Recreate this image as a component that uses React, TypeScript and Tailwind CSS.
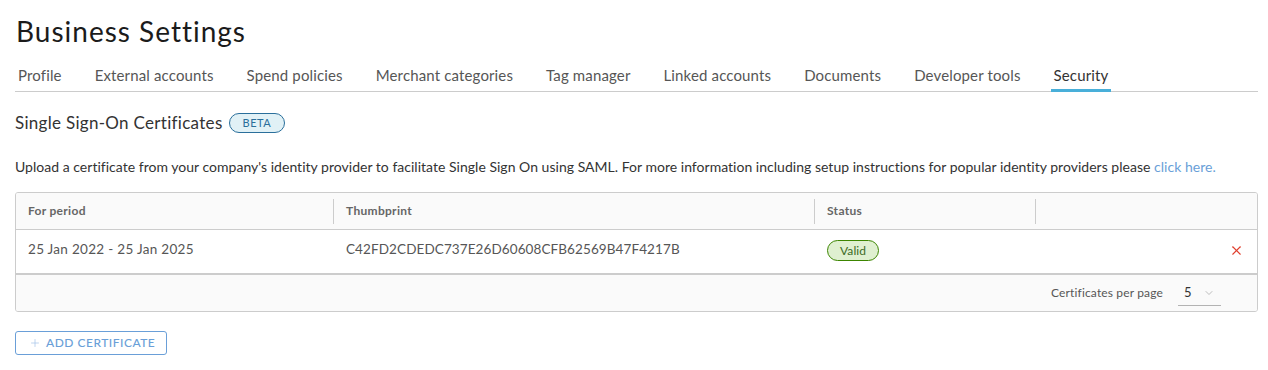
import { X, Plus, ChevronDown } from "lucide-react";

const tabs = [
  "Profile",
  "External accounts",
  "Spend policies",
  "Merchant categories",
  "Tag manager",
  "Linked accounts",
  "Documents",
  "Developer tools",
  "Security",
];

export default function App() {
  return (
    <div className="min-h-[370px] bg-white pt-[12px] pr-[10px] pl-[15px] font-['Lato',sans-serif] text-[#333]">
      <h1 className="pl-px text-[28px] leading-[38px] tracking-[1px] text-[#1b1b1b]">Business Settings</h1>

      <nav className="mt-[15px] flex border-b border-[#cccccc] pl-[3px]">
        {tabs.map((tab) => (
          <div
            key={tab}
            className={`mr-[33px] -mb-px border-b-[3px] pb-[4px] text-[15px] leading-[20px] tracking-[0.14px] ${
              tab === "Security"
                ? "-mx-[3px] border-[#49afd9] px-[3px] text-[#333]"
                : "border-transparent text-[#565656]"
            }`}
          >
            {tab}
          </div>
        ))}
      </nav>

      <div className="mt-[19px] flex items-center gap-[6px]">
        <h2 className="text-[17px] leading-[24px] tracking-[0.3px] text-[#333]">Single Sign-On Certificates</h2>
        <span className="rounded-full border border-[#2a6f9b] bg-[#e1f1f6] px-[13px] text-[11px] leading-[18px] tracking-[0.5px] text-[#2a6f9b]">
          BETA
        </span>
      </div>

      <p className="mt-[22px] text-[14px] leading-[20px] tracking-[0.02px] text-[#333]">
        Upload a certificate from your company's identity provider to facilitate Single Sign On using
        SAML. For more information including setup instructions for popular identity providers please{" "}
        <a className="text-[#6a9fd8]">click here.</a>
      </p>

      <div className="mt-[15px] overflow-hidden rounded-[3px] border border-[#cccccc]">
        <div className="grid h-[37px] grid-cols-[318px_481px_221px_1fr] border-b border-[#cccccc] bg-[#fafafa] text-[12px] font-bold tracking-[0.3px] text-[#666]">
          {["For period", "Thumbprint", "Status", ""].map((h, i) => (
            <div key={i} className="relative flex items-center px-[12px]">
              {h}
              {i < 3 && <span className="absolute top-[6px] right-0 h-[25px] w-px bg-[#cccccc]" />}
            </div>
          ))}
        </div>
        <div className="grid h-[43px] grid-cols-[318px_481px_221px_1fr] text-[13.5px] tracking-[0.1px] text-[#565656]">
          <div className="px-[12px] pt-[9px] tracking-[0.3px]">25 Jan 2022 - 25 Jan 2025</div>
          <div className="px-[12px] pt-[9px]">C42FD2CDEDC737E26D60608CFB62569B47F4217B</div>
          <div className="px-[12px] pt-[10px]">
            <span className="inline-block rounded-full border border-[#3c8500] bg-[#dff0d0] px-[12px] text-[12px] leading-[19px] text-[#3c6b1f]">
              Valid
            </span>
          </div>
          <div className="flex justify-end pt-[13px] pr-[13px]">
            <X size={15} strokeWidth={1.75} color="#e0402e" />
          </div>
        </div>
        <div className="flex h-[38px] items-center justify-end border-t-2 border-[#cccccc] bg-[#fafafa] pr-[36px] text-[12px] tracking-[0.15px] text-[#565656]">
          <span>Certificates per page</span>
          <div className="ml-[15px] flex w-[43px] items-center justify-between border-b border-[#b3b3b3] pt-[3px] pb-[2px] pl-[6px] pr-[6px]">
            <span className="text-[13px] text-[#333]">5</span>
            <ChevronDown size={12} strokeWidth={1.25} color="#999" />
          </div>
        </div>
      </div>

      <button className="mt-[19px] flex h-[24px] items-center gap-[5px] rounded-[3px] border border-[#6a9fd8] pr-[11px] pl-[13px] text-[12px] font-medium tracking-[0.5px] text-[#6a9fd8]">
        <Plus size={12} strokeWidth={1.5} color="#a9c6ea" />
        ADD CERTIFICATE
      </button>
    </div>
  );
}
